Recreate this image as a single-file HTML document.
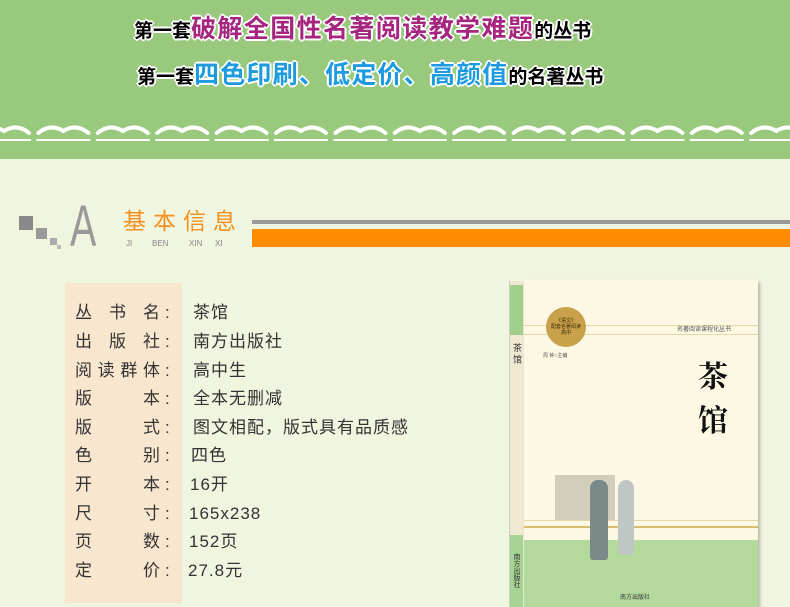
<!DOCTYPE html>
<html><head><meta charset="utf-8"><style>
*{margin:0;padding:0;box-sizing:border-box}
body{width:790px;height:607px;overflow:hidden;background:#f0f5df;font-family:"Liberation Sans","Noto Sans CJK SC",sans-serif;position:relative}
.top{position:absolute;left:0;top:0;width:790px;height:159px;background:#98c97c}
.t{position:absolute;font-weight:bold;white-space:nowrap;text-shadow:2px 0 #fff,-2px 0 #fff,0 2px #fff,0 -2px #fff,1px 1px #fff,-1px -1px #fff,1px -1px #fff,-1px 1px #fff}
.k{color:#000;font-size:19px}
.p{color:#a6257e;font-size:25px;letter-spacing:1.4px}
.b{color:#1d9ae0;font-size:25px;letter-spacing:1.2px}
.row{position:absolute;left:75px;font-size:17px;color:#333;height:28px;line-height:28px;white-space:nowrap}
.row .l{display:inline-block;width:85px;text-align:justify;text-align-last:justify}
.row .c{position:absolute;left:90px}
.row .v{position:absolute;left:118px;letter-spacing:1px}
</style></head><body>
<div class="top">
<div class="t" style="left:134px;top:14px;line-height:30px"><span class="k">第一套</span><span class="p">破解全国性名著阅读教学难题</span><span class="k">的丛书</span></div>
<div class="t" style="left:137px;top:59px;line-height:32px"><span class="k">第一套</span><span class="b">四色印刷、低定价、高颜值</span><span class="k">的名著丛书</span></div>
<svg style="position:absolute;left:0;top:120px" width="790" height="24">
<defs><pattern id="w" x="-23" y="0" width="59.4" height="24" patternUnits="userSpaceOnUse">
<path d="M2 13 Q14 3 27 11 Q40 3 52 13" stroke="#fff" stroke-width="4" fill="none" stroke-linecap="round"/>
<rect x="0" y="19" width="54" height="2" fill="#fff"/></pattern></defs>
<rect width="790" height="24" fill="url(#w)"/></svg>
</div>
<div style="position:absolute;left:19px;top:216px;width:14px;height:14px;background:#888"></div>
<div style="position:absolute;left:36px;top:228px;width:11px;height:11px;background:#999"></div>
<div style="position:absolute;left:50px;top:238px;width:7px;height:7px;background:#aaa"></div>
<div style="position:absolute;left:57px;top:245px;width:4px;height:4px;background:#bbb"></div>
<div style="position:absolute;left:70px;top:197px;font-size:58px;color:#999;line-height:60px;transform:scaleX(0.68);transform-origin:left">A</div>
<div style="position:absolute;left:123px;top:207px;font-size:23px;color:#f5901e;letter-spacing:7px;line-height:28px">基本信息</div>
<div style="position:absolute;left:126px;top:239px;font-size:8px;color:#888;line-height:10px">JI</div>
<div style="position:absolute;left:152px;top:239px;font-size:8px;color:#888;line-height:10px">BEN</div>
<div style="position:absolute;left:189px;top:239px;font-size:8px;color:#888;line-height:10px">XIN</div>
<div style="position:absolute;left:215px;top:239px;font-size:8px;color:#888;line-height:10px">XI</div>
<div style="position:absolute;left:252px;top:220px;width:538px;height:4px;background:#999"></div>
<div style="position:absolute;left:252px;top:229px;width:538px;height:18px;background:#ff8c00"></div>
<div style="position:absolute;left:65px;top:283px;width:117px;height:320px;background:#f9e6cf"></div>
<div class="row" style="top:299px"><span class="l">丛书名</span><span class="c">:</span><span class="v">茶馆</span></div>
<div class="row" style="top:328px"><span class="l">出版社</span><span class="c">:</span><span class="v">南方出版社</span></div>
<div class="row" style="top:357px"><span class="l">阅读群体</span><span class="c">:</span><span class="v">高中生</span></div>
<div class="row" style="top:385px"><span class="l">版本</span><span class="c">:</span><span class="v">全本无删减</span></div>
<div class="row" style="top:414px"><span class="l">版式</span><span class="c">:</span><span class="v">图文相配，版式具有品质感</span></div>
<div class="row" style="top:442px"><span class="l">色别</span><span class="c">:</span><span class="v" style="left:116px">四色</span></div>
<div class="row" style="top:471px"><span class="l">开本</span><span class="c">:</span><span class="v" style="left:115px">16开</span></div>
<div class="row" style="top:500px"><span class="l">尺寸</span><span class="c">:</span><span class="v" style="left:114px">165x238</span></div>
<div class="row" style="top:528px"><span class="l">页数</span><span class="c">:</span><span class="v" style="left:114px">152页</span></div>
<div class="row" style="top:557px"><span class="l">定价</span><span class="c">:</span><span class="v" style="left:113px">27.8元</span></div>
<!-- book -->
<div style="position:absolute;left:509px;top:281px;width:15px;height:326px;background:#efe9d2;border-left:1px solid #ccc"></div>
<div style="position:absolute;left:510px;top:285px;width:13px;height:50px;background:#9fcf8a"></div>
<div style="position:absolute;left:510px;top:535px;width:13px;height:72px;background:#a7d494"></div>
<div style="position:absolute;left:511px;top:343px;font-size:9px;color:#333;writing-mode:vertical-rl">茶 馆</div>
<div style="position:absolute;left:511px;top:553px;font-size:7px;color:#333;writing-mode:vertical-rl">南方出版社</div>
<div style="position:absolute;left:524px;top:280px;width:234px;height:327px;background:#fdf8e4;box-shadow:2px 2px 3px rgba(0,0,0,.25)"></div>
<div style="position:absolute;left:524px;top:325px;width:234px;height:10px;border-top:1px solid #e6d7a8;border-bottom:1px solid #e6d7a8"></div>
<div style="position:absolute;left:546px;top:307px;width:40px;height:40px;border-radius:50%;background:#c9a14a"></div>
<div style="position:absolute;left:546px;top:318px;width:40px;font-size:5px;text-align:center;color:#3a2a00;line-height:6px">《语文》<br>配套名著阅读<br>高中</div>
<div style="position:absolute;left:677px;top:324px;font-size:6px;color:#555">名著阅读课程化丛书</div>
<div style="position:absolute;left:543px;top:352px;font-size:5px;color:#555">周 钟○主编</div>
<div style="position:absolute;left:698px;top:352px;font-size:30px;font-weight:bold;color:#111;line-height:44px;font-family:'Noto Serif CJK SC',serif;width:34px">茶<br>馆</div>
<div style="position:absolute;left:524px;top:520px;width:234px;height:8px;border-top:1px solid #e6d7a8;border-bottom:2px solid #d9bd6f"></div>
<div style="position:absolute;left:524px;top:540px;width:234px;height:67px;background:#b3d99c"></div>
<div style="position:absolute;left:555px;top:475px;width:60px;height:45px;background:#b8b0a0;opacity:.6"></div>
<div style="position:absolute;left:590px;top:480px;width:18px;height:80px;background:#7a8a88;border-radius:8px 8px 3px 3px"></div>
<div style="position:absolute;left:618px;top:480px;width:16px;height:75px;background:#c0c6c4;border-radius:8px 8px 3px 3px"></div>
<div style="position:absolute;left:620px;top:592px;font-size:6px;color:#333">南方出版社</div>
</body></html>
